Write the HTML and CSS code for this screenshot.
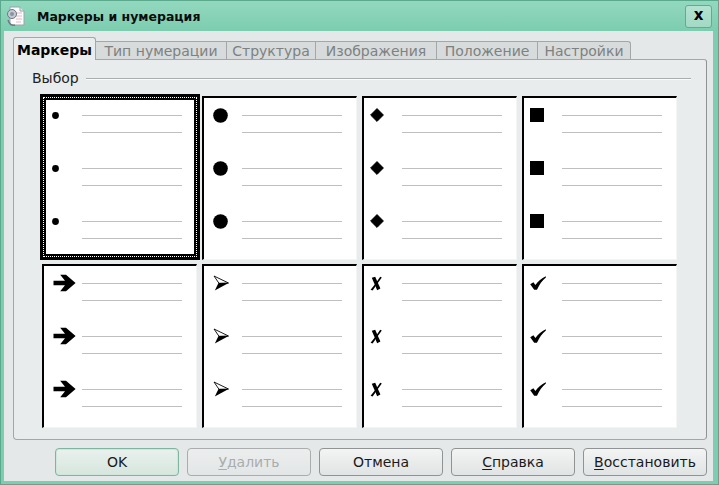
FILE: index.html
```html
<!DOCTYPE html>
<html lang="ru">
<head>
<meta charset="utf-8">
<title>Маркеры и нумерация</title>
<link rel="stylesheet" href="styles.css">
</head>
<body>
<svg class="defs" width="0" height="0" aria-hidden="true">
  <defs>
    <symbol id="s-dot" viewBox="0 0 7 7"><circle cx="3.5" cy="3.5" r="3.4" fill="#000"/></symbol>
    <symbol id="s-big" viewBox="0 0 15 15"><circle cx="7.5" cy="7.5" r="7.3" fill="#000"/></symbol>
    <symbol id="s-dia" viewBox="0 0 14 14"><path d="M7 0.6 L13.4 7 L7 13.4 L0.6 7 Z" fill="#000" stroke="#000" stroke-width="1" stroke-linejoin="round"/></symbol>
    <symbol id="s-sq" viewBox="0 0 14 14"><rect x="0" y="0" width="14" height="14" fill="#000"/></symbol>
    <symbol id="s-arr" viewBox="0 0 23 18"><path d="M0.5 6.8 H12 L7.2 0.8 H13 L22.6 9 L13 17.2 H7.2 L12 11.2 H0.5 Z" fill="#000"/></symbol>
    <symbol id="s-head" viewBox="0 0 16 16"><path d="M1 1 L15.5 8 L6 8.3 Z" fill="#fff" stroke="#000" stroke-width="0.9" stroke-linejoin="round"/><path d="M5.5 8 L15.6 8 L1.8 15.6 Z" fill="#000"/></symbol>
    <symbol id="s-x" viewBox="0 0 12 15"><path d="M1.8 1.8 L5.2 0.8 L10.4 12.6 L7.2 14.2 Z" fill="#000"/><path d="M10.2 0.8 C7.6 4.6 4.6 9 0.6 13.8 L2.6 14.4 C6 9.8 9 5.4 11.8 1.6 Z" fill="#000"/></symbol>
    <symbol id="s-chk" viewBox="0 0 16 14"><path d="M0.2 8.2 L3.4 6.2 L5.4 9 C8.2 5 11.4 2.2 15.8 0.2 L15.9 1.4 C12.2 4.4 9.2 8.6 7 13.8 L4.2 13.8 Z" fill="#000"/></symbol>
  </defs>
</svg>
<div class="window">
  <div class="titlebar">
    <svg class="appicon" width="22" height="22" viewBox="0 0 22 22">
      <path d="M5 2 H15 L19 6 V20 H5 Z" fill="#fdfdfd" stroke="#9aa3b0" stroke-width="1"/>
      <path d="M15 2 V6 H19" fill="#e4e8ee" stroke="#9aa3b0" stroke-width="1"/>
      <path d="M11 8 H17 M11 11 H17 M11 14 H17 M11 17 H16" stroke="#e2b7c0" stroke-width="1"/>
      <circle cx="7" cy="9" r="4.5" fill="#c5cbd4" stroke="#6f7886" stroke-width="1"/>
      <circle cx="7" cy="9" r="2" fill="#8a93a0"/>
      <path d="M3 15 C4 19 7 21 10 20" fill="none" stroke="#6f7886" stroke-width="1.4"/>
    </svg>
    <span class="title">Маркеры и нумерация</span>
    <span class="close">x</span>
  </div>
  <div class="client">
    <div class="tabs">
      <div class="tab active">Маркеры</div>
      <div class="tab t2">Тип нумерации</div>
      <div class="tab t3">Структура</div>
      <div class="tab t4">Изображения</div>
      <div class="tab t5">Положение</div>
      <div class="tab t6 last">Настройки</div>
    </div>
    <div class="panel">
      <div class="group-label"><span>Выбор</span><i class="rule"></i></div>
      <div class="grid">
        <div class="cell sel c-dot">
          <div class="item"><div class="r1"><span class="mk"><svg width="7" height="7"><use href="#s-dot"/></svg></span><i class="ln"></i></div><i class="ln2"></i></div>
          <div class="item"><div class="r1"><span class="mk"><svg width="7" height="7"><use href="#s-dot"/></svg></span><i class="ln"></i></div><i class="ln2"></i></div>
          <div class="item"><div class="r1"><span class="mk"><svg width="7" height="7"><use href="#s-dot"/></svg></span><i class="ln"></i></div><i class="ln2"></i></div>
        </div>
        <div class="cell c-big">
          <div class="item"><div class="r1"><span class="mk"><svg width="15" height="15"><use href="#s-big"/></svg></span><i class="ln"></i></div><i class="ln2"></i></div>
          <div class="item"><div class="r1"><span class="mk"><svg width="15" height="15"><use href="#s-big"/></svg></span><i class="ln"></i></div><i class="ln2"></i></div>
          <div class="item"><div class="r1"><span class="mk"><svg width="15" height="15"><use href="#s-big"/></svg></span><i class="ln"></i></div><i class="ln2"></i></div>
        </div>
        <div class="cell c-dia">
          <div class="item"><div class="r1"><span class="mk"><svg width="14" height="14"><use href="#s-dia"/></svg></span><i class="ln"></i></div><i class="ln2"></i></div>
          <div class="item"><div class="r1"><span class="mk"><svg width="14" height="14"><use href="#s-dia"/></svg></span><i class="ln"></i></div><i class="ln2"></i></div>
          <div class="item"><div class="r1"><span class="mk"><svg width="14" height="14"><use href="#s-dia"/></svg></span><i class="ln"></i></div><i class="ln2"></i></div>
        </div>
        <div class="cell c-sq">
          <div class="item"><div class="r1"><span class="mk"><svg width="14" height="14"><use href="#s-sq"/></svg></span><i class="ln"></i></div><i class="ln2"></i></div>
          <div class="item"><div class="r1"><span class="mk"><svg width="14" height="14"><use href="#s-sq"/></svg></span><i class="ln"></i></div><i class="ln2"></i></div>
          <div class="item"><div class="r1"><span class="mk"><svg width="14" height="14"><use href="#s-sq"/></svg></span><i class="ln"></i></div><i class="ln2"></i></div>
        </div>
        <div class="cell c-arr">
          <div class="item"><div class="r1"><span class="mk"><svg width="23" height="18"><use href="#s-arr"/></svg></span><i class="ln"></i></div><i class="ln2"></i></div>
          <div class="item"><div class="r1"><span class="mk"><svg width="23" height="18"><use href="#s-arr"/></svg></span><i class="ln"></i></div><i class="ln2"></i></div>
          <div class="item"><div class="r1"><span class="mk"><svg width="23" height="18"><use href="#s-arr"/></svg></span><i class="ln"></i></div><i class="ln2"></i></div>
        </div>
        <div class="cell c-head">
          <div class="item"><div class="r1"><span class="mk"><svg width="16" height="16"><use href="#s-head"/></svg></span><i class="ln"></i></div><i class="ln2"></i></div>
          <div class="item"><div class="r1"><span class="mk"><svg width="16" height="16"><use href="#s-head"/></svg></span><i class="ln"></i></div><i class="ln2"></i></div>
          <div class="item"><div class="r1"><span class="mk"><svg width="16" height="16"><use href="#s-head"/></svg></span><i class="ln"></i></div><i class="ln2"></i></div>
        </div>
        <div class="cell c-x">
          <div class="item"><div class="r1"><span class="mk"><svg width="12" height="15"><use href="#s-x"/></svg></span><i class="ln"></i></div><i class="ln2"></i></div>
          <div class="item"><div class="r1"><span class="mk"><svg width="12" height="15"><use href="#s-x"/></svg></span><i class="ln"></i></div><i class="ln2"></i></div>
          <div class="item"><div class="r1"><span class="mk"><svg width="12" height="15"><use href="#s-x"/></svg></span><i class="ln"></i></div><i class="ln2"></i></div>
        </div>
        <div class="cell c-chk">
          <div class="item"><div class="r1"><span class="mk"><svg width="16" height="14"><use href="#s-chk"/></svg></span><i class="ln"></i></div><i class="ln2"></i></div>
          <div class="item"><div class="r1"><span class="mk"><svg width="16" height="14"><use href="#s-chk"/></svg></span><i class="ln"></i></div><i class="ln2"></i></div>
          <div class="item"><div class="r1"><span class="mk"><svg width="16" height="14"><use href="#s-chk"/></svg></span><i class="ln"></i></div><i class="ln2"></i></div>
        </div>
      </div>
    </div>
    <div class="buttons">
      <button class="btn default">OK</button>
      <button class="btn" disabled><u>У</u>далить</button>
      <button class="btn">Отмена</button>
      <button class="btn"><u>С</u>правка</button>
      <button class="btn"><u>В</u>осстановить</button>
    </div>
  </div>
</div>
</body>
</html>
```
FILE: styles.css
```css
* { box-sizing: border-box; }
html, body { margin: 0; padding: 0; }
body {
  width: 719px;
  height: 485px;
  overflow: hidden;
  font-family: "DejaVu Sans", "Liberation Sans", sans-serif;
  font-size: 14px;
  color: #1a1a1a;
}
.defs { position: absolute; width: 0; height: 0; overflow: hidden; }

.window {
  width: 719px;
  height: 485px;
  display: flex;
  flex-direction: column;
  background: #7fcdb1;
  border: 1px solid #5aa98d;
}
.titlebar {
  height: 30px;
  flex: none;
  display: flex;
  align-items: center;
  padding: 0 5px 0 4px;
  background: linear-gradient(#93d8bf, #7ccdaf);
}
.appicon { flex: none; }
.title {
  margin-left: 10px;
  font-weight: bold;
  font-size: 12.5px;
  color: #0c0c0c;
  flex: 1;
}
.close {
  width: 27px;
  height: 23px;
  display: flex;
  align-items: center;
  justify-content: center;
  border: 1px solid #62ab91;
  border-radius: 3px;
  background: linear-gradient(#b4e2d1, #a2d9c5);
  font-weight: bold;
  font-size: 15px;
  line-height: 1;
  color: #000;
  padding-bottom: 2px;
  margin-right: 1px;
}

.client {
  flex: 1;
  margin: 0 5px 3px 3px;
  background: #e5e8e8;
  display: flex;
  flex-direction: column;
  padding: 6px 6px 0 9px;
}

.tabs {
  display: flex;
  align-items: flex-end;
  height: 22px;
  position: relative;
  z-index: 1;
}
.tab {
  height: 18px;
  display: flex;
  align-items: center;
  justify-content: center;
  background: #d7dbdb;
  border: 1px solid #a3a7a7;
  border-bottom: none;
  border-left: none;
  color: #7d8181;
  font-size: 14px;
}
.tab.active {
  width: 83px;
  background: #eaeded;
  color: #000;
  font-weight: bold;
  border-left: 1px solid #a3a7a7;
  border-radius: 3px 3px 0 0;
  margin-bottom: -1px;
  height: 23px;
  padding-top: 1px;
}
.t2 { width: 131px; }
.t3 { width: 89px; }
.t4 { width: 121px; }
.t5 { width: 101px; }
.t6 { width: 93px; }
.tab.last { border-radius: 0 3px 0 0; }

.panel {
  height: 381px;
  background: #e9ecec;
  border: 1px solid #a3a7a7;
  border-right-color: #8e9292;
  border-radius: 0 3px 4px 4px;
  padding: 9px 15px 0 18px;
}
.group-label {
  display: flex;
  align-items: center;
  height: 18px;
  font-size: 14px;
  color: #222;
}
.group-label .rule {
  flex: 1;
  height: 1px;
  background: #a9adad;
  margin-left: 7px;
  box-shadow: 0 1px 0 #fbfbfb;
}

.grid {
  margin: 9px 0 0 10px;
  display: grid;
  grid-template-columns: repeat(4, 155px);
  grid-auto-rows: 164px;
  column-gap: 5px;
  row-gap: 4px;
}
.cell {
  background: #fff;
  border-top: 2px solid #000;
  border-left: 2px solid #000;
  border-right: 1px solid #f4f4f4;
  border-bottom: 1px solid #f4f4f4;
  padding-top: 7px;
  display: flex;
  flex-direction: column;
  gap: 25px;
}
.cell.sel {
  margin: -2px -3px 0 -2px;
  border: 6px solid #000;
  outline: 1px dotted #fff;
  outline-offset: -4px;
  padding-top: 5px;
}
.item { display: flex; flex-direction: column; }
.r1 { height: 20px; display: flex; align-items: center; }
.mk { width: 38px; flex: none; display: flex; align-items: center; }
.sel .mk { width: 36px; }
.mk svg { display: block; }
.ln { display: block; width: 100px; height: 1px; background: #bfbfbf; }
.ln2 { display: block; width: 100px; height: 1px; background: #bfbfbf; margin: 7px 0 0 38px; }
.sel .ln2 { margin-left: 36px; }

.c-dot .mk svg { margin-left: 6px; }
.c-big .mk svg { margin-left: 9px; }
.c-dia .mk svg { margin-left: 6px; }
.c-sq .mk svg { margin-left: 6px; }
.c-arr .mk svg { margin-left: 9px; }
.c-head .mk svg { margin-left: 9px; }
.c-x .mk svg { margin-left: 6px; }
.c-chk .mk svg { margin-left: 6px; }

.buttons {
  display: flex;
  gap: 8px;
  padding: 8px 0 0 42px;
}
.btn {
  width: 124px;
  height: 28px;
  border: 1px solid #8f9393;
  border-radius: 4px;
  background: linear-gradient(#f3f4f4, #e1e4e4);
  font-family: "DejaVu Sans", "Liberation Sans", sans-serif;
  font-size: 14px;
  color: #1a1a1a;
  padding: 0;
}
.btn u { text-decoration: underline; text-underline-offset: 2px; }
.btn.default {
  border-color: #7fb59f;
  background: linear-gradient(#e9f1ed, #d7e6de);
  box-shadow: inset 0 0 0 1px #cfe6db;
}
.btn:disabled {
  color: #a9adad;
  border-color: #a9adad;
  background: linear-gradient(#eceeee, #e3e6e6);
}
```
